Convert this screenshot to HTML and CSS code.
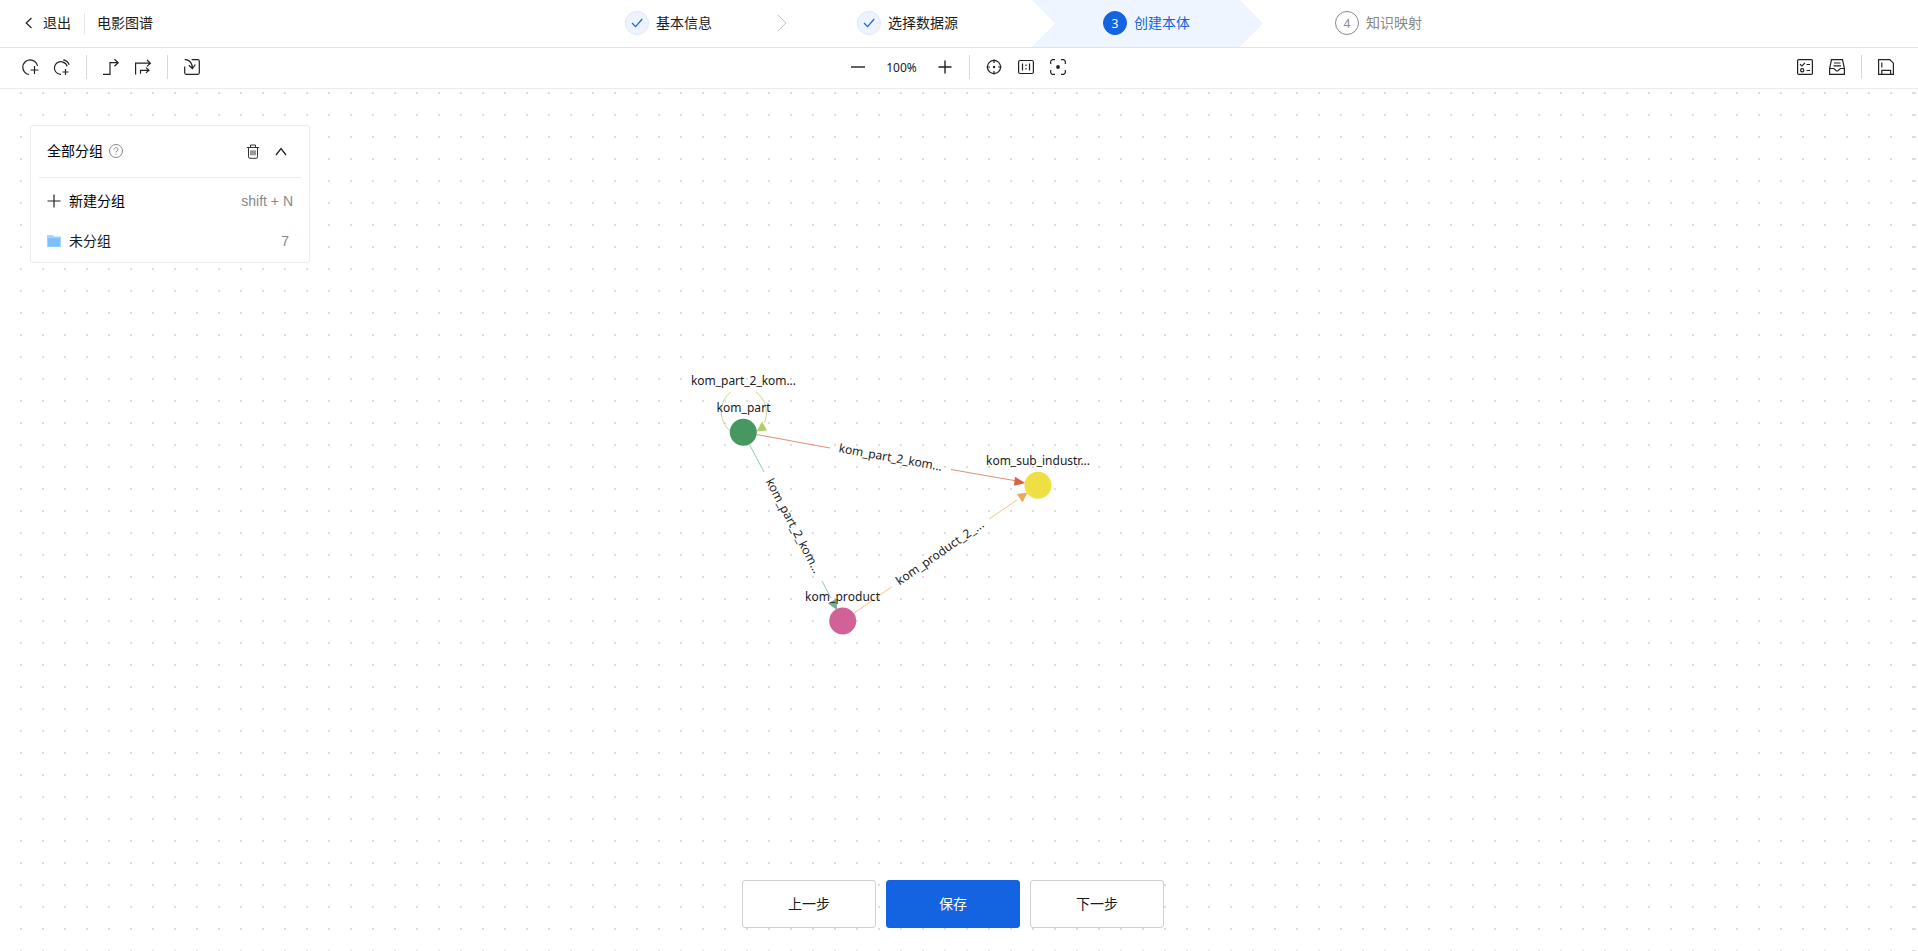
FILE: index.html
```html
<!DOCTYPE html>
<html lang="zh-CN">
<head>
<meta charset="utf-8">
<title>电影图谱</title>
<link rel="stylesheet" href="styles.css">
</head>
<body>
<div class="app">
  <header class="header">
    <div class="header-left">
      <svg class="back" width="8" height="12" viewBox="0 0 8 12"><path d="M6.5 1 1.2 6l5.3 5"/></svg>
      <span class="exit">退出</span>
      <span class="header-line"></span>
      <span class="title">电影图谱</span>
    </div>
    <nav class="steps">
      <div class="step step-first">
        <span class="dot done"><svg width="12" height="10" viewBox="0 0 12 10"><path d="M1 5l3.6 3.700L11.200 1"/></svg></span>
        <span class="name">基本信息</span>
        <svg class="chevron" width="10" height="18" viewBox="0 0 10 18"><path d="M1 1l7.800 8L1 17"/></svg>
      </div>
      <div class="step">
        <span class="dot done"><svg width="12" height="10" viewBox="0 0 12 10"><path d="M1 5l3.600 3.700L11.200 1"/></svg></span>
        <span class="name">选择数据源</span>
      </div>
      <div class="step active"><span class="dot">3</span><span class="name">创建本体</span></div>
      <div class="step todo"><span class="dot">4</span><span class="name">知识映射</span></div>
    </nav>
  </header>

  <div class="toolbar">
    <div class="tools tools-left">
      <svg class="ico" viewBox="0 0 16 16"><path d="M15.500 7A7.400 7.400 0 1 0 7 15.500M12.500 7v8M8.500 11h8"/></svg>
      <svg class="ico" viewBox="0 0 16 16"><path d="M10.900 4.300A6.300 6.300 0 1 0 7 15.300M11.500 10v6M8.500 13h6M9.200.8a7.600 7.600 0 0 1 6 5M8.600 3.200a6 6 0 0 1 4.600 4.200"/></svg>
      <span class="line"></span>
      <svg class="ico" viewBox="0 0 16 16"><path d="M0 15.300h7V3.700h8M11.500.3 15.200 3.700l-3.700 3.600"/></svg>
      <svg class="ico" viewBox="0 0 16 16"><path d="M.6 15.500V4.200h14.600M12 1l3.400 3.200L12 7.400M5.500 14.800v-3.500h8.500M11 8.600l3 2.700-3 2.600"/></svg>
      <span class="line"></span>
      <svg class="ico" viewBox="0 0 16 16"><path d="M7.600.7h6.200q1.500 0 1.500 1.500v11.600q0 1.500-1.500 1.500H2.200q-1.500 0-1.500-1.500V7.500M.7.7h1.500C6 1.500 8.200 4.500 8.400 9.200M4.800 6.200l3.600 3.300 2.900-4"/></svg>
    </div>
    <div class="tools tools-mid">
      <svg class="ico thick" viewBox="0 0 16 16"><path d="M1 8h14"/></svg>
      <span class="percent">100%</span>
      <svg class="ico thick" viewBox="0 0 16 16"><path d="M1.500 8h13M8 1.500v13"/></svg>
      <span class="line"></span>
      <svg class="ico" viewBox="0 0 16 16"><circle cx="8" cy="8" r="6.600"/><path d="M8 .5v3.500M8 12v3.500M.5 8H4M12 8h3.500"/><circle class="fill" cx="8" cy="8" r="1.200"/></svg>
      <svg class="ico" viewBox="0 0 16 16"><rect x=".6" y="1.500" width="14.800" height="13" rx="1.500"/><path d="M4.500 4.500v7M11.500 4.500v7M8 5.500v1.500M8 9v1.500"/></svg>
      <svg class="ico" viewBox="0 0 16 16"><path d="M.7 5V2.200L2.200.7H5M11 .7h2.800l1.500 1.500V5M15.300 11v2.800l-1.500 1.500H11M5 15.300H2.200L.7 13.800V11"/><circle class="fill" cx="8" cy="8" r="1.900"/></svg>
    </div>
    <div class="tools tools-right">
      <svg class="ico" viewBox="0 0 16 16"><rect x=".6" y=".6" width="14.800" height="14.800" rx="1.200"/><path d="M3 5.200l2 1.800 3-3.200M9.500 5.500H13M9.500 11.500H13"/><circle cx="5.200" cy="11.300" r="1.600"/></svg>
      <svg class="ico" viewBox="0 0 16 16"><path d="M.6 15.400V9.500L2.500.6h11l1.900 8.900v5.900zM.6 9.500h4.200L7.500 12h1.200l2.600-2.500h4.100M5 4h6.500M4.500 6.800h7.500"/></svg>
      <span class="line"></span>
      <svg class="ico" viewBox="0 0 16 16"><path d="M.6.6h11.200l3.600 3.600v11.200H.6zM3.800 15.400v-4h8.800v4M3.800 3.500v5"/></svg>
    </div>
  </div>

  <main class="canvas">
    <svg class="graph" width="1918" height="863" viewBox="0 88 1918 863">
      <g class="edges">
        <path stroke="#c9d98a" d="M730.500 392A25.500 25.500 0 0 0 730 431"/>
        <path stroke="#c9d98a" d="M756 392A26 26 0 0 1 764.500 423"/>
        <path stroke="#e48e70" d="M756.500 434.500 830 448M951 469.500l66 11.500"/>
        <path stroke="#8ec9b4" d="M749.500 444.500l14.500 27.500M822 581l9 17"/>
        <path stroke="#f2c684" d="M853.500 613.500 891.500 587M989 519l28-19"/>
      </g>
      <path fill="#b5cd68" d="M756.500 431.500l5.500-10 5 9z"/>
      <path fill="#d5633f" d="M1025.500 483l-10.500-6.200-1 9z"/>
      <path fill="#eaaa55" d="M1027.500 492.500l-5 10-5.500-8.500z"/>
      <path fill="#69b295" d="M837 610l-9-6.500 8.500-5z"/>
      <circle cx="743.300" cy="432.300" r="13.500" fill="#479860"/>
      <circle cx="1038" cy="485.300" r="13.500" fill="#eedf44"/>
      <circle cx="842.700" cy="621" r="13.500" fill="#d16297"/>
      <g class="labels">
        <text x="743.500" y="384.500" textLength="105">kom_part_2_kom...</text>
        <text x="743.500" y="411.500" textLength="54">kom_part</text>
        <text x="1038" y="464.500" textLength="104">kom_sub_industr...</text>
        <text x="842.500" y="600.500" textLength="75">kom_product</text>
        <text transform="translate(890.500 458) rotate(10.300)" y="3.500" textLength="105">kom_part_2_kom...</text>
        <text transform="translate(793 526) rotate(62.300)" y="3.500" textLength="105">kom_part_2_kom...</text>
        <text transform="translate(940.300 553) rotate(-34.800)" y="3.500" textLength="104">kom_product_2_...</text>
      </g>
    </svg>

    <aside class="panel">
      <div class="panel-head">
        <span class="name">全部分组</span>
        <svg class="help" width="14" height="14" viewBox="0 0 14 14"><circle cx="7" cy="7" r="6.500"/><path d="M5 5.600C5 3 9 3 9 5.400 9 6.800 7 6.900 7 8.500M7 9.700v1.100"/></svg>
        <svg class="trash" width="14" height="15" viewBox="0 0 14 15"><path d="M.8 3.500h12.400M4.500 3.300V1h5v2.300M2.500 3.500v9.300q0 1.500 1.500 1.500h6q1.500 0 1.500-1.500V3.500M5 6.300v5M7 6.300v5M9 6.300v5"/></svg>
        <svg class="fold" width="12" height="9" viewBox="0 0 12 9"><path d="M1 8l5-6.500L11 8"/></svg>
      </div>
      <div class="panel-row new">
        <svg class="plus" width="14" height="14" viewBox="0 0 14 14"><path d="M.5 7h13M7 .5v13"/></svg>
        <span class="name">新建分组</span>
        <span class="hint">shift + N</span>
      </div>
      <div class="panel-row">
        <svg width="14" height="12" viewBox="0 0 14 12"><path fill="#a5d5ff" d="M0 0h5.500l1.500 1.500h7V12H0z"/><path fill="#7cc0ff" d="M1 3h12v8.500H1z"/></svg>
        <span class="name">未分组</span>
        <span class="hint count">7</span>
      </div>
    </aside>

    <div class="actions">
      <button class="btn">上一步</button>
      <button class="btn primary">保存</button>
      <button class="btn">下一步</button>
    </div>
  </main>
</div>
</body>
</html>
```
FILE: styles.css
```css
* { box-sizing: border-box; }
body {
  margin: 0;
  font-family: "Noto Sans", "Noto Sans CJK SC", sans-serif;
  font-size: 14px;
  color: #1a1a1a;
  background: #fff;
}
svg { display: block; flex: none; fill: none; }
.app { display: flex; flex-direction: column; width: 100%; height: 951px; overflow: hidden; }

.header {
  display: flex;
  height: 48px;
  flex: none;
  font-family: "Noto Sans CJK SC", sans-serif;
  border-bottom: 1px solid #e3e3e3;
}
.header-left { display: flex; align-items: center; width: 577px; padding-left: 25px; height: 46px; }
.back { stroke: #222; stroke-width: 1.2; }
.exit { margin-left: 10px; padding-bottom: 2px; }
.title, .name { padding-bottom: 2px; }
.header-line { width: 1px; height: 21px; background: #e6e6e6; margin: 0 12px 0 13px; }
.steps { display: flex; }
.step {
  display: flex;
  align-items: center;
  gap: 7px;
  width: 232px;
  height: 47px;
  padding: 0 0 1px 48px;
}
.dot {
  display: flex;
  align-items: center;
  justify-content: center;
  width: 24px;
  height: 24px;
  border-radius: 50%;
  border: 1px solid #888;
  font: 12px "Noto Sans", sans-serif;
}
.dot.done { background: #eef4fe; border-color: #dce8fb; }
.dot.done svg { stroke: #1463e0; stroke-width: 1.2; }
.chevron { stroke: #bfbfbf; margin-left: 58px; }
.step.active {
  width: 231px;
  padding-left: 71px;
  margin-left: -9px;
  color: #1463e0;
  background: #eef5ff;
  clip-path: polygon(0 0, 208px 0, 100% 50%, 208px 100%, 0 100%, 23px 50%);
}
.active .dot { background: #1463e0; border-color: #1463e0; color: #fff; }
.todo { color: #888; padding-left: 72px; }

.toolbar {
  display: flex;
  flex: none;
  height: 41px;
  border-bottom: 1px solid #ebebeb;
}
.tools { display: flex; align-items: center; gap: 16px; height: 38px; }
.tools-left { width: 850px; padding-left: 22px; }
.tools-right { margin-left: auto; padding-right: 24px; }
.ico { width: 16px; height: 16px; overflow: visible; stroke: #222; stroke-width: 1.2; }
.thick { stroke-width: 1.4; }
.fill { fill: #222; stroke: none; }
.line { width: 1px; height: 24px; background: #d9d9d9; }
.percent { width: 39px; text-align: center; font-size: 12px; }

.canvas {
  position: relative;
  flex: 1;
  background:
    conic-gradient(from 270deg at 2px 2px, #ddd 90deg, transparent 0) 1914px 3px / 22px 22px repeat-y,
    conic-gradient(from 270deg at 2px 2px, #ddd 90deg, transparent 0) 20px 3px / 22px 22px;
}
.graph { position: absolute; left: 0; top: -1px; }
.edges path { stroke-width: 1; }
.labels text {
  fill: #1a1a1a;
  font: 12px "Noto Sans", sans-serif;
  text-anchor: middle;
}

.panel {
  position: absolute;
  left: 30px;
  top: 36px;
  width: 280px;
  height: 138px;
  background: #fff;
  border: 1px solid #ebebeb;
  border-radius: 3px;
  padding: 0 8px;
  font-family: "Noto Sans CJK SC", sans-serif;
}
.panel-head {
  display: flex;
  align-items: center;
  height: 52px;
  padding: 0 14px 1px 8px;
  border-bottom: 1px solid #ebebeb;
  color: #000;
}
.help { stroke: #888; margin-left: 6px; }
.trash { stroke: #333; margin-left: auto; }
.fold { stroke: #222; stroke-width: 1.3; margin-left: 15px; }
.panel-row { display: flex; align-items: center; gap: 8px; height: 40px; padding: 0 8px; }
.new { margin-top: 3px; color: #000; }
.plus { stroke: #222; stroke-width: 1.2; }
.hint { margin-left: auto; color: #888; font: 14px "Liberation Sans", sans-serif; }
.count { margin-right: 4px; }

.actions {
  position: absolute;
  left: 742px;
  bottom: 23px;
  display: flex;
  gap: 10px;
}
.btn {
  width: 134px;
  height: 48px;
  padding: 0 0 2px;
  border: 1px solid #d0d0d0;
  border-radius: 3px;
  background: #fff;
  color: #1a1a1a;
  font: 14px "Noto Sans CJK SC", sans-serif;
}
.primary { background: #1463e0; border-color: #1463e0; color: #fff; }
```
